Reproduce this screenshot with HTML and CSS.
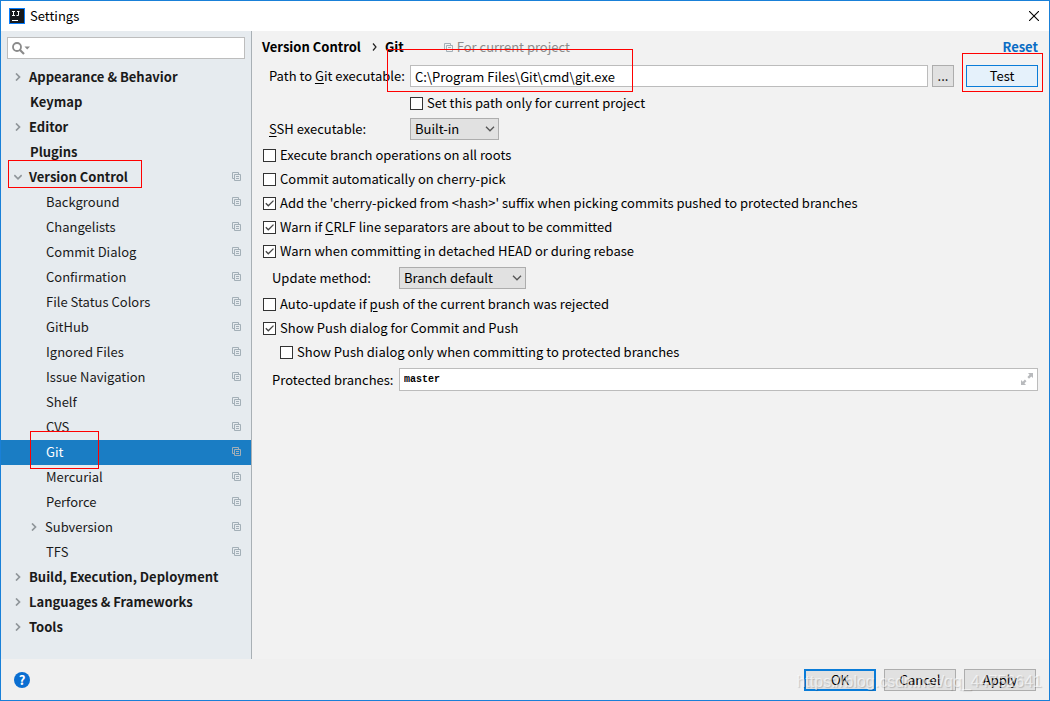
FILE: index.html
```html
<!DOCTYPE html>
<html lang="en">
<head>
<meta charset="utf-8">
<title>Settings</title>
<link rel="stylesheet" href="styles.css">
</head>
<body>
<svg class="defs" aria-hidden="true">
  <symbol id="right" viewBox="0 0 8 8"><path d="M2 0.5 5.5 4 2 7.5" fill="none" stroke="#8f959a" stroke-width="1.7"/></symbol>
  <symbol id="down" viewBox="0 0 8 8"><path d="M0.3 2.2 4 5.8 7.7 2.2" fill="none" stroke="#8f959a" stroke-width="1.7"/></symbol>
  <symbol id="copy" viewBox="0 0 9 9"><path d="M2 6.5H.5V.5H6.500V2M2.500 2.500H8.500V8.500H2.500ZM4 4.500H7M4 6.500H7" fill="none" stroke="currentColor"/></symbol>
  <symbol id="arrow" viewBox="0 0 10 6"><path d="M1 .8 5 4.800 9 .8" fill="none" stroke="#555" stroke-width="1.300"/></symbol>
  <symbol id="tick" viewBox="0 0 13 13"><path d="M2.800 6.300 5.300 8.800 10.500 3.600" fill="none" stroke="#444" stroke-width="1.300"/></symbol>
</svg>
<div class="window">
  <header class="titlebar">
    <svg class="logo" viewBox="0 0 16 16"><rect width="16" height="16" fill="#087cfa"/><rect x="1" y="1" width="14" height="14" fill="#17191c"/><path d="M3 3.500H6M4.500 3.500V7.500M3 7.500H6M8 3.500H10.500M9.500 3.500V7.500H7.500M3 12.500H9" fill="none" stroke="#fff"/></svg>
    <h1 class="title">Settings</h1>
    <button class="close" aria-label="Close"><svg viewBox="0 0 10 10"><path d="M0 0 10 10M10 0 0 10" stroke="#000" stroke-width="1.100"/></svg></button>
  </header>
  <div class="content">
    <nav class="sidebar">
      <label class="search"><svg viewBox="0 0 18 13"><circle cx="5" cy="5" r="4" fill="none" stroke="#8a8a8a" stroke-width="1.800"/><path d="M8 8 12 12" stroke="#8a8a8a" stroke-width="2.200"/><path d="M12.500 4.500H18L15.200 7.500Z" fill="#8a8a8a"/></svg><input aria-label="Search settings"></label>
      <ul class="tree">
        <li class="node"><svg class="twist"><use href="#right"/></svg>Appearance &amp; Behavior</li>
        <li class="node leaf">Keymap</li>
        <li class="node"><svg class="twist"><use href="#right"/></svg>Editor</li>
        <li class="node leaf">Plugins</li>
        <li class="node"><svg class="twist"><use href="#down"/></svg>Version Control<svg class="copy"><use href="#copy"/></svg><span class="mark mark-vcs"></span></li>
        <li class="node sub">Background<svg class="copy"><use href="#copy"/></svg></li>
        <li class="node sub">Changelists<svg class="copy"><use href="#copy"/></svg></li>
        <li class="node sub">Commit Dialog<svg class="copy"><use href="#copy"/></svg></li>
        <li class="node sub">Confirmation<svg class="copy"><use href="#copy"/></svg></li>
        <li class="node sub">File Status Colors<svg class="copy"><use href="#copy"/></svg></li>
        <li class="node sub">GitHub<svg class="copy"><use href="#copy"/></svg></li>
        <li class="node sub">Ignored Files<svg class="copy"><use href="#copy"/></svg></li>
        <li class="node sub">Issue Navigation<svg class="copy"><use href="#copy"/></svg></li>
        <li class="node sub">Shelf<svg class="copy"><use href="#copy"/></svg></li>
        <li class="node sub">CVS<svg class="copy"><use href="#copy"/></svg></li>
        <li class="node sub selected">Git<svg class="copy"><use href="#copy"/></svg><span class="mark mark-git"></span></li>
        <li class="node sub">Mercurial<svg class="copy"><use href="#copy"/></svg></li>
        <li class="node sub">Perforce<svg class="copy"><use href="#copy"/></svg></li>
        <li class="node sub parent"><svg class="twist"><use href="#right"/></svg>Subversion<svg class="copy"><use href="#copy"/></svg></li>
        <li class="node sub">TFS<svg class="copy"><use href="#copy"/></svg></li>
        <li class="node"><svg class="twist"><use href="#right"/></svg>Build, Execution, Deployment</li>
        <li class="node"><svg class="twist"><use href="#right"/></svg>Languages &amp; Frameworks</li>
        <li class="node"><svg class="twist"><use href="#right"/></svg>Tools</li>
      </ul>
    </nav>
    <main class="panel">
      <div class="heading">
        <h2 class="crumb">Version Control</h2><svg class="sep" viewBox="0 0 5 8"><path d="M1 .5 4 4 1 7.500" fill="none" stroke="#222" stroke-width="1.200"/></svg><h2 class="crumb">Git</h2>
        <span class="scope"><svg class="copy"><use href="#copy"/></svg>For current project</span>
        <a class="reset" href="#">Reset</a>
      </div>
      <div class="row path">
        <label class="wide" for="path">Path to <u>G</u>it executable:</label>
        <div class="field"><input id="path" class="text" value="C:\Program Files\Git\cmd\git.exe"><span class="mark mark-path"></span></div>
        <button class="browse">...</button>
        <div class="test-cell"><button class="test">Test</button><span class="mark mark-test"></span></div>
      </div>
      <label class="check indent-wide"><span class="box"><input type="checkbox"><svg><use href="#tick"/></svg></span><span>Set this path only for current project</span></label>
      <div class="row ssh">
        <label class="wide" for="ssh"><u>S</u>SH executable:</label>
        <div class="combo combo-ssh"><select id="ssh"><option>Built-in</option></select><svg><use href="#arrow"/></svg></div>
      </div>
      <div class="checks">
        <label class="check"><span class="box"><input type="checkbox"><svg><use href="#tick"/></svg></span><span>Execute branch operations on all roots</span></label>
        <label class="check"><span class="box"><input type="checkbox"><svg><use href="#tick"/></svg></span><span>Commit automatically on cherry-pick</span></label>
        <label class="check"><span class="box"><input type="checkbox" checked><svg><use href="#tick"/></svg></span><span>Add the 'cherry-picked from &lt;hash&gt;' suffix when picking commits pushed to protected branches</span></label>
        <label class="check"><span class="box"><input type="checkbox" checked><svg><use href="#tick"/></svg></span><span>Warn if <u>C</u>RLF line separators are about to be committed</span></label>
        <label class="check"><span class="box"><input type="checkbox" checked><svg><use href="#tick"/></svg></span><span>Warn when committing in detached HEAD or during rebase</span></label>
      </div>
      <div class="row update">
        <label class="narrow" for="update">Update method:</label>
        <div class="combo combo-update"><select id="update"><option>Branch default</option></select><svg><use href="#arrow"/></svg></div>
      </div>
      <div class="checks">
        <label class="check"><span class="box"><input type="checkbox"><svg><use href="#tick"/></svg></span><span>Auto-update if <u>p</u>ush of the current branch was rejected</span></label>
        <label class="check"><span class="box"><input type="checkbox" checked><svg><use href="#tick"/></svg></span><span>Show Push dialog for Commit and Push</span></label>
        <label class="check indent"><span class="box"><input type="checkbox"><svg><use href="#tick"/></svg></span><span>Show Push dialog only when committing to protected branches</span></label>
      </div>
      <div class="row update">
        <label class="narrow" for="branches">Protected branches:</label>
        <div class="field branches"><input id="branches" class="text mono" value="master"><button class="expand" aria-label="Expand"><svg viewBox="0 0 12 12"><path d="M7 0H12V5L10.300 3.400 8 5.700 6.400 4.100 8.600 1.800ZM0 7V12H5L3.400 10.300 5.500 8.200 3.900 6.600 1.800 8.700Z" fill="#b8babd"/></svg></button></div>
      </div>
    </main>
  </div>
  <footer class="footer">
    <button class="help" aria-label="Help">?</button>
    <div class="actions">
      <button class="action primary">OK</button>
      <button class="action">Cancel</button>
      <button class="action">Apply</button>
      <span class="watermark">https://blog.csdn.net/qq_44752641</span>
    </div>
  </footer>
</div>
</body>
</html>
```
FILE: styles.css
```css
* { box-sizing: border-box; }
body { margin: 0; font: 13px/18px "Noto Sans CJK SC", "Noto Sans", sans-serif; color: #000; }
button, input, select { font: inherit; color: inherit; margin: 0; padding: 0; border: 0; border-radius: 0; }
svg { display: block; flex: none; }
.defs { position: absolute; width: 0; height: 0; }
u { text-underline-offset: 2px; }

.window { display: flex; flex-direction: column; min-height: 100vh; border: 1px solid #1980d8; background: #f2f2f2; }
.titlebar { display: flex; align-items: center; height: 30px; padding: 0 9px 0 8px; background: #fff; }
.logo { width: 16px; height: 16px; }
.title { margin: 0 auto 0 5px; font-size: 13px; font-weight: 400; }
.close { display: grid; place-items: center; width: 12px; height: 20px; background: none; }
.close svg { width: 10px; height: 10px; }

.content { display: flex; flex: 1; }
.sidebar { width: 251px; flex: none; padding-top: 6px; border-right: 1px solid #a9b0b5; background: #e6ebef; }
.search { display: flex; align-items: center; height: 22px; margin: 0 6px; padding-left: 4px; border: 1px solid #bdbdbd; background: #fff; }
.search svg { width: 18px; height: 13px; }
.search input { flex: 1; min-width: 0; background: none; outline: 0; }
.tree { margin: 6px 0 0; padding: 0; list-style: none; }
.node { position: relative; display: flex; align-items: center; height: 25px; padding: 0 10px 2px 13px; font-weight: 700; color: #1a1a1a; }
.twist { width: 8px; height: 8px; margin-right: 7px; }
.leaf { padding-left: 29px; }
.sub { padding-left: 45px; font-weight: 400; }
.parent { padding-left: 29px; }
.selected { background: #1a7dc4; color: #fff; }
.copy { width: 9px; height: 9px; color: #a3afb7; }
.node .copy { margin-left: auto; }

.mark { position: absolute; z-index: 2; border: 1px solid #f00; pointer-events: none; }
.mark-vcs { left: 7px; top: -5px; width: 134px; height: 28px; }
.mark-git { left: 29px; top: -9px; width: 69px; height: 38px; }
.mark-path { left: -23px; top: -16px; width: 246px; height: 43px; }
.mark-test { left: -4px; top: -12px; width: 81px; height: 39px; }

.panel { flex: 1; min-width: 0; padding: 0 11px 0 10px; }
.heading { display: flex; align-items: center; height: 34px; padding-bottom: 2px; }
.crumb { margin: 0; font-size: 13px; font-weight: 700; }
.sep { width: 5px; height: 8px; margin: 0 8px 0 11px; }
.scope { display: flex; align-items: center; gap: 4px; margin-left: 40px; color: #8c8c8c; }
.reset { margin-left: auto; font-weight: 700; color: #0a6cc4; text-decoration: none; }
.row { display: flex; align-items: center; }
.wide, .narrow { flex: none; white-space: nowrap; }
.wide { width: 148px; padding-left: 7px; }
.narrow { width: 137px; padding-left: 10px; }
.field { position: relative; flex: 1; min-width: 0; height: 22px; }
.text { display: block; width: 100%; height: 100%; padding: 0 4px; border: 1px solid #bcbcbc; background: #fff; outline: 0; }
.mono { font: 700 10px "Liberation Mono", monospace; }
.browse { width: 22px; height: 22px; margin: 0 12px 0 4px; border: 1px solid #adadad; background: #e1e1e1; }
.test-cell { position: relative; }
.test { display: block; width: 72px; height: 22px; border: 1px solid #0a7cd8; background: #e5f1fb; }
.check { display: flex; align-items: center; gap: 4px; width: fit-content; height: 24px; padding-left: 1px; }
.box { position: relative; width: 13px; height: 13px; flex: none; }
.box input { display: block; width: 13px; height: 13px; border: 1px solid #333; background: #fff; appearance: none; }
.box svg { position: absolute; inset: 0; width: 13px; height: 13px; visibility: hidden; pointer-events: none; }
.box input:checked + svg { visibility: visible; }
.indent-wide { margin: 4px 0 3px 147px; }
.indent { margin-left: 17px; }
.checks { margin: 3px 0 4px; }
.combo { position: relative; height: 22px; }
.combo select { width: 100%; height: 100%; padding: 0 4px; border: 1px solid #adadad; background: #e1e1e1; appearance: none; }
.combo svg { position: absolute; right: 4px; top: 8px; width: 10px; height: 6px; pointer-events: none; }
.combo-ssh { width: 89px; }
.combo-update { width: 127px; }
.branches { height: 23px; }
.expand { position: absolute; right: 5px; top: 5px; background: none; }
.expand svg { width: 12px; height: 12px; }

.footer { display: flex; align-items: center; justify-content: space-between; height: 41px; padding: 0 13px; background: #f0f0f0; }
.help { width: 16px; height: 16px; border-radius: 50%; background: #0a6ed1; color: #fff; font-weight: 700; line-height: 16px; }
.actions { position: relative; display: flex; gap: 8px; }
.action { width: 72px; height: 22px; border: 1px solid #adadad; background: #e1e1e1; }
.primary { border: 2px solid #0a7cd8; }
.watermark { position: absolute; right: -6px; top: 3px; font: 16px/20px "Liberation Sans", sans-serif; color: rgba(255, 255, 255, .6); text-shadow: 1px 1px 1px rgba(0, 0, 0, .18); white-space: nowrap; pointer-events: none; }
```
